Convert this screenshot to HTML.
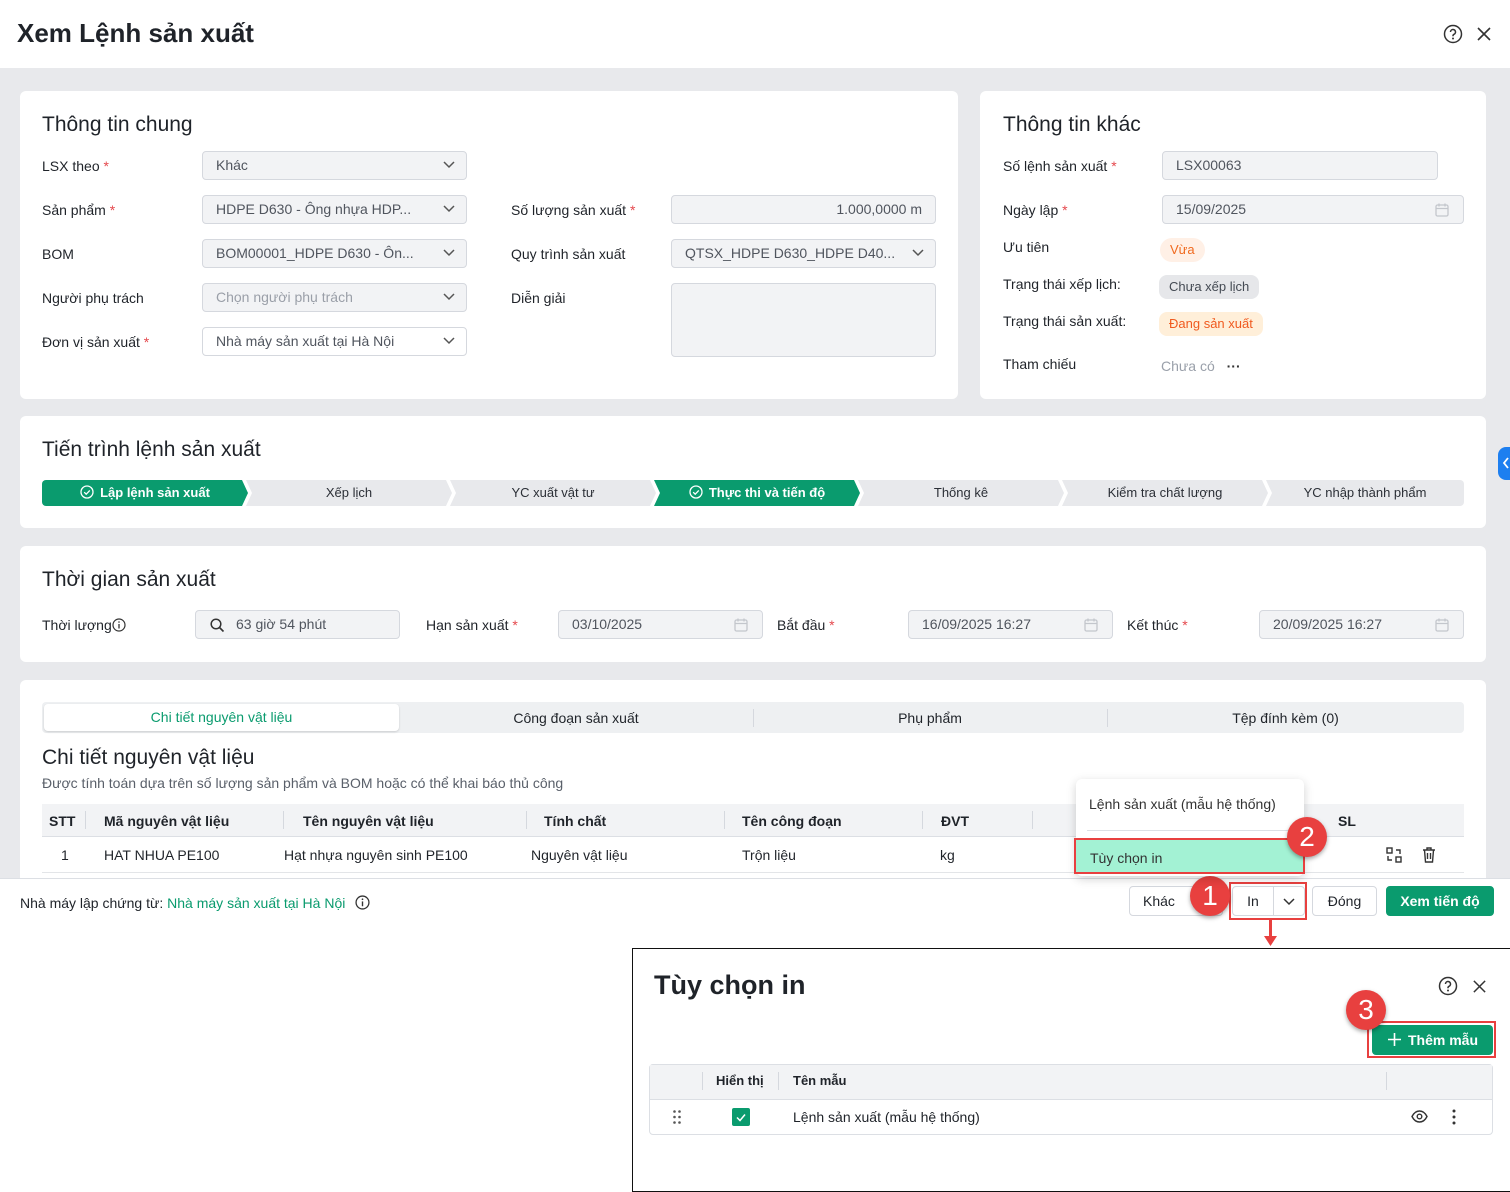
<!DOCTYPE html>
<html><head><meta charset="utf-8"><style>
*{box-sizing:border-box;margin:0;padding:0}
body{width:1510px;height:1190px;position:relative;overflow:hidden;background:#fff;font-family:"Liberation Sans","Noto Sans CJK SC",sans-serif;font-size:14px;color:#1f2329}
.a{position:absolute}
.card{position:absolute;background:#fff;border-radius:6px}
.h2{position:absolute;font-size:21px;color:#1f2329}
.lbl{position:absolute;font-size:14px;color:#1f2329}
.req{color:#e5484d}
.inp{position:absolute;height:29px;border:1px solid #d5d8de;border-radius:4px;background:#f2f3f5;padding:0 13px;line-height:27px;color:#50555e;white-space:nowrap;overflow:hidden}
.chev{position:absolute;right:11px;top:9px}
.step{position:absolute;top:480px;height:26px;line-height:26px;text-align:center;font-size:13px;background:#e8e9ec;color:#2b2f36;clip-path:polygon(0 0,calc(100% - 6px) 0,100% 50%,calc(100% - 6px) 100%,0 100%,6px 50%)}
.step.g{background:#0a9b6e;color:#fff;font-weight:bold}
.badge{position:absolute;border-radius:12px;padding:0 10px;height:24px;line-height:24px;font-size:13px}
.th{position:absolute;top:813px;font-weight:bold;font-size:14px}
.td{position:absolute;top:847px}
.sep{position:absolute;width:1px;height:18px;background:#d5d8de}
.circ{position:absolute;width:40px;height:40px;border-radius:50%;background:#e8403f;color:#fff;font-size:28px;text-align:center;line-height:40px;box-shadow:0 2px 4px rgba(0,0,0,.35)}
.btn{position:absolute;height:30px;line-height:28px;border:1px solid #d5d8de;border-radius:4px;background:#fff;text-align:center;font-size:14px}
</style></head><body>
<div class="a" style="left:0;top:68px;width:1510px;height:810px;background:#e8e9ec"></div>
<div class="a" style="left:17px;top:18px;font-size:26px;font-weight:bold;color:#1f2329">Xem Lệnh sản xuất</div>
<svg class="a" style="left:1443px;top:24px" width="20" height="20" viewBox="0 0 20 20"><circle cx="10" cy="10" r="8.5" fill="none" stroke="#333" stroke-width="1.5"/><path d="M7.5 8a2.5 2.5 0 1 1 3.5 2.3c-.7.3-1 .8-1 1.5v.5" fill="none" stroke="#333" stroke-width="1.5"/><circle cx="10" cy="14.5" r="1" fill="#333"/></svg>
<svg class="a" style="left:1476px;top:26px" width="16" height="16" viewBox="0 0 16 16"><path d="M2 2L14 14M14 2L2 14" stroke="#333" stroke-width="1.6"/></svg>

<div class="card" style="left:20px;top:91px;width:938px;height:308px"></div>
<div class="h2" style="left:42px;top:113px">Thông tin chung</div>
<div class="lbl" style="left:42px;top:158px">LSX theo <span class="req">*</span></div>
<div class="inp" style="left:202px;top:151px;width:265px">Khác<svg class="chev" width="12" height="8"><path d="M1 1l5 5 5-5" fill="none" stroke="#555" stroke-width="1.5"/></svg></div>
<div class="lbl" style="left:42px;top:202px">Sản phẩm <span class="req">*</span></div>
<div class="inp" style="left:202px;top:195px;width:265px">HDPE D630 - Ông nhựa HDP...<svg class="chev" width="12" height="8"><path d="M1 1l5 5 5-5" fill="none" stroke="#555" stroke-width="1.5"/></svg></div>
<div class="lbl" style="left:42px;top:246px">BOM</div>
<div class="inp" style="left:202px;top:239px;width:265px">BOM00001_HDPE D630 - Ôn...<svg class="chev" width="12" height="8"><path d="M1 1l5 5 5-5" fill="none" stroke="#555" stroke-width="1.5"/></svg></div>
<div class="lbl" style="left:42px;top:290px">Người phụ trách</div>
<div class="inp" style="left:202px;top:283px;width:265px;color:#9a9fa8">Chọn người phụ trách<svg class="chev" width="12" height="8"><path d="M1 1l5 5 5-5" fill="none" stroke="#555" stroke-width="1.5"/></svg></div>
<div class="lbl" style="left:42px;top:334px">Đơn vị sản xuất <span class="req">*</span></div>
<div class="inp" style="left:202px;top:327px;width:265px;background:#fff">Nhà máy sản xuất tại Hà Nội<svg class="chev" width="12" height="8"><path d="M1 1l5 5 5-5" fill="none" stroke="#555" stroke-width="1.5"/></svg></div>
<div class="lbl" style="left:511px;top:202px">Số lượng sản xuất <span class="req">*</span></div>
<div class="inp" style="left:671px;top:195px;width:265px;text-align:right">1.000,0000 m</div>
<div class="lbl" style="left:511px;top:246px">Quy trình sản xuất</div>
<div class="inp" style="left:671px;top:239px;width:265px">QTSX_HDPE D630_HDPE D40...<svg class="chev" width="12" height="8"><path d="M1 1l5 5 5-5" fill="none" stroke="#555" stroke-width="1.5"/></svg></div>
<div class="lbl" style="left:511px;top:290px">Diễn giải</div>
<div class="inp" style="left:671px;top:283px;width:265px;height:74px"></div>

<div class="card" style="left:980px;top:91px;width:506px;height:308px"></div>
<div class="h2" style="left:1003px;top:113px">Thông tin khác</div>
<div class="lbl" style="left:1003px;top:158px">Số lệnh sản xuất <span class="req">*</span></div>
<div class="inp" style="left:1162px;top:151px;width:276px">LSX00063</div>
<div class="lbl" style="left:1003px;top:202px">Ngày lập <span class="req">*</span></div>
<div class="inp" style="left:1162px;top:195px;width:302px">15/09/2025<svg class="a" style="right:14px;top:7px" width="14" height="14" viewBox="0 0 14 14"><rect x="1" y="2" width="12" height="11" rx="1.5" fill="none" stroke="#c3c6cc" stroke-width="1.3"/><path d="M1 5.5h12M4 0.5v3M10 0.5v3" stroke="#c3c6cc" stroke-width="1.3"/></svg></div>
<div class="lbl" style="left:1003px;top:239px">Ưu tiên</div>
<div class="badge" style="left:1160px;top:238px;background:#fff0e6;color:#f06a1f">Vừa</div>
<div class="lbl" style="left:1003px;top:276px">Trạng thái xếp lịch:</div>
<div class="badge" style="left:1159px;top:275px;background:#e6e7ea;color:#444a53;border-radius:8px">Chưa xếp lịch</div>
<div class="lbl" style="left:1003px;top:313px">Trạng thái sản xuất:</div>
<div class="badge" style="left:1159px;top:312px;background:#ffefd9;color:#f05a1f;border-radius:8px">Đang sản xuất</div>
<div class="lbl" style="left:1003px;top:356px">Tham chiếu</div>
<div class="lbl" style="left:1161px;top:358px;color:#9aa0aa">Chưa có <span style="color:#333;font-weight:bold;margin-left:8px">···</span></div>
<div class="a" style="left:1498px;top:447px;width:14px;height:33px;background:#1d7ff0;border-radius:8px 0 0 8px"></div>
<svg class="a" style="left:1502px;top:457px" width="8" height="12"><path d="M6 1L2 6l4 5" fill="none" stroke="#fff" stroke-width="1.8"/></svg>

<div class="card" style="left:20px;top:416px;width:1466px;height:112px"></div>
<div class="h2" style="left:42px;top:438px">Tiến trình lệnh sản xuất</div>
<div class="step g" style="left:42px;width:206px;clip-path:polygon(0 0,calc(100% - 6px) 0,100% 50%,calc(100% - 6px) 100%,0 100%);border-radius:4px 0 0 4px">
<svg style="vertical-align:-2px;margin-right:6px" width="14" height="14" viewBox="0 0 14 14"><circle cx="7" cy="7" r="6" fill="none" stroke="#fff" stroke-width="1.3"/><path d="M4.2 7.2l2 2 3.6-3.8" fill="none" stroke="#fff" stroke-width="1.3"/></svg>Lập lệnh sản xuất</div>
<div class="step" style="left:246px;width:206px">Xếp lịch</div>
<div class="step" style="left:450px;width:206px">YC xuất vật tư</div>
<div class="step g" style="left:654px;width:206px"><svg style="vertical-align:-2px;margin-right:6px" width="14" height="14" viewBox="0 0 14 14"><circle cx="7" cy="7" r="6" fill="none" stroke="#fff" stroke-width="1.3"/><path d="M4.2 7.2l2 2 3.6-3.8" fill="none" stroke="#fff" stroke-width="1.3"/></svg>Thực thi và tiến độ</div>
<div class="step" style="left:858px;width:206px">Thống kê</div>
<div class="step" style="left:1062px;width:206px">Kiểm tra chất lượng</div>
<div class="step" style="left:1266px;width:198px;clip-path:polygon(0 0,100% 0,100% 100%,0 100%,6px 50%);border-radius:0 4px 4px 0">YC nhập thành phẩm</div>

<div class="card" style="left:20px;top:546px;width:1466px;height:116px"></div>
<div class="h2" style="left:42px;top:568px">Thời gian sản xuất</div>
<div class="lbl" style="left:42px;top:617px">Thời lượng<svg style="vertical-align:-2px" width="14" height="14" viewBox="0 0 14 14"><circle cx="7" cy="7" r="6" fill="none" stroke="#333" stroke-width="1.2"/><path d="M7 6v4.5" stroke="#333" stroke-width="1.3"/><circle cx="7" cy="4" r=".8" fill="#333"/></svg></div>
<div class="inp" style="left:195px;top:610px;width:205px;padding-left:40px"><svg class="a" style="left:14px;top:7px" width="15" height="15" viewBox="0 0 15 15"><circle cx="6" cy="6" r="4.8" fill="none" stroke="#333" stroke-width="1.5"/><path d="M9.5 9.5l4 4" stroke="#333" stroke-width="1.6"/></svg>63 giờ 54 phút</div>
<div class="lbl" style="left:426px;top:617px">Hạn sản xuất <span class="req">*</span></div>
<div class="inp" style="left:558px;top:610px;width:205px">03/10/2025<svg class="a" style="right:14px;top:7px" width="14" height="14" viewBox="0 0 14 14"><rect x="1" y="2" width="12" height="11" rx="1.5" fill="none" stroke="#c3c6cc" stroke-width="1.3"/><path d="M1 5.5h12M4 0.5v3M10 0.5v3" stroke="#c3c6cc" stroke-width="1.3"/></svg></div>
<div class="lbl" style="left:777px;top:617px">Bắt đầu <span class="req">*</span></div>
<div class="inp" style="left:908px;top:610px;width:205px">16/09/2025 16:27<svg class="a" style="right:14px;top:7px" width="14" height="14" viewBox="0 0 14 14"><rect x="1" y="2" width="12" height="11" rx="1.5" fill="none" stroke="#c3c6cc" stroke-width="1.3"/><path d="M1 5.5h12M4 0.5v3M10 0.5v3" stroke="#c3c6cc" stroke-width="1.3"/></svg></div>
<div class="lbl" style="left:1127px;top:617px">Kết thúc <span class="req">*</span></div>
<div class="inp" style="left:1259px;top:610px;width:205px">20/09/2025 16:27<svg class="a" style="right:14px;top:7px" width="14" height="14" viewBox="0 0 14 14"><rect x="1" y="2" width="12" height="11" rx="1.5" fill="none" stroke="#c3c6cc" stroke-width="1.3"/><path d="M1 5.5h12M4 0.5v3M10 0.5v3" stroke="#c3c6cc" stroke-width="1.3"/></svg></div>

<div class="card" style="left:20px;top:680px;width:1466px;height:210px;border-radius:6px 6px 0 0"></div>
<div class="a" style="left:42px;top:702px;width:1422px;height:31px;background:#eef0f2;border-radius:4px"></div>
<div class="a" style="left:44px;top:704px;width:355px;height:27px;background:#fff;border-radius:4px;box-shadow:0 1px 2px rgba(0,0,0,.15);text-align:center;line-height:27px;color:#0a9b6e">Chi tiết nguyên vật liệu</div>
<div class="a" style="left:400px;top:710px;width:352px;text-align:center">Công đoạn sản xuất</div>
<div class="a" style="left:753px;top:710px;width:354px;text-align:center">Phụ phẩm</div>
<div class="a" style="left:1107px;top:710px;width:357px;text-align:center">Tệp đính kèm (0)</div>
<div class="sep" style="left:753px;top:709px"></div><div class="sep" style="left:1107px;top:709px"></div>
<div class="h2" style="left:42px;top:746px">Chi tiết nguyên vật liệu</div>
<div class="a" style="left:42px;top:775px;color:#5a606a">Được tính toán dựa trên số lượng sản phẩm và BOM hoặc có thể khai báo thủ công</div>
<div class="a" style="left:42px;top:804px;width:1422px;height:33px;background:#f2f3f5;border-bottom:1px solid #dcdfe4"></div>
<div class="th" style="left:49px">STT</div><div class="sep" style="left:85px;top:811px"></div>
<div class="th" style="left:104px">Mã nguyên vật liệu</div><div class="sep" style="left:283px;top:811px"></div>
<div class="th" style="left:303px">Tên nguyên vật liệu</div><div class="sep" style="left:526px;top:811px"></div>
<div class="th" style="left:544px">Tính chất</div><div class="sep" style="left:724px;top:811px"></div>
<div class="th" style="left:742px">Tên công đoạn</div><div class="sep" style="left:922px;top:811px"></div>
<div class="th" style="left:941px">ĐVT</div><div class="sep" style="left:1032px;top:811px"></div>
<div class="th" style="left:1338px">SL</div>
<div class="td" style="left:61px">1</div>
<div class="td" style="left:104px">HAT NHUA PE100</div>
<div class="td" style="left:284px">Hạt nhựa nguyên sinh PE100</div>
<div class="td" style="left:531px">Nguyên vật liệu</div>
<div class="td" style="left:742px">Trộn liệu</div>
<div class="td" style="left:940px">kg</div>
<svg class="a" style="left:1386px;top:847px" width="16" height="16" viewBox="0 0 16 16"><rect x="1" y="1" width="5" height="5" fill="none" stroke="#333" stroke-width="1.4"/><rect x="10" y="10" width="5" height="5" fill="none" stroke="#333" stroke-width="1.4"/><path d="M10 3h4v4M6 13H2V9" fill="none" stroke="#333" stroke-width="1.4"/></svg>
<svg class="a" style="left:1422px;top:847px" width="14" height="16" viewBox="0 0 14 16"><path d="M1 3h12M5 3V1h4v2M2.5 3l1 12h7l1-12M5.5 6v6M8.5 6v6" fill="none" stroke="#333" stroke-width="1.4"/></svg>
<div class="a" style="left:42px;top:872px;width:1422px;height:1px;background:#e3e5e8"></div>

<div class="a" style="left:0;top:878px;width:1510px;height:312px;background:#fff;border-top:1px solid #dcdfe4"></div>
<div class="a" style="left:20px;top:895px">Nhà máy lập chứng từ: <span style="color:#0a9b6e">Nhà máy sản xuất tại Hà Nội</span> <svg style="vertical-align:-2px;margin-left:6px" width="15" height="15" viewBox="0 0 14 14"><circle cx="7" cy="7" r="6" fill="none" stroke="#333" stroke-width="1.2"/><path d="M7 6v4.5" stroke="#333" stroke-width="1.3"/><circle cx="7" cy="4" r=".8" fill="#333"/></svg></div>
<div class="btn" style="left:1129px;top:886px;width:94px;text-align:left;padding-left:13px">Khác</div>
<div class="btn" style="left:1232px;top:886px;width:73px"><span class="a" style="left:0;width:40px;text-align:center">In</span><span class="a" style="left:40px;top:0;width:1px;height:28px;background:#d5d8de"></span><svg class="a" style="left:50px;top:11px" width="12" height="8"><path d="M1 1l5 5 5-5" fill="none" stroke="#333" stroke-width="1.5"/></svg></div>
<div class="a" style="left:1229px;top:882px;width:78px;height:38px;border:2px solid #e8403f"></div>
<div class="btn" style="left:1312px;top:886px;width:65px">Đóng</div>
<div class="btn" style="left:1386px;top:886px;width:108px;background:#0a9b6e;border-color:#0a9b6e;color:#fff;font-weight:bold">Xem tiến độ</div>
<div class="circ" style="left:1190px;top:876px">1</div>
<div class="a" style="left:1269px;top:920px;width:3px;height:20px;background:#e8403f"></div>
<svg class="a" style="left:1264px;top:936px" width="13" height="10"><path d="M0 0h13L6.5 10z" fill="#e8403f"/></svg>

<div class="a" style="left:1076px;top:779px;width:228px;height:97px;background:#fff;border-radius:6px;box-shadow:0 3px 10px rgba(0,0,0,.18)"></div>
<div class="a" style="left:1089px;top:796px;color:#333">Lệnh sản xuất (mẫu hệ thống)</div>
<div class="a" style="left:1087px;top:830px;width:204px;height:1px;background:#dcdfe4"></div>
<div class="a" style="left:1074px;top:838px;width:231px;height:36px;background:#a3f2d4;border:2px solid #e8403f;padding-left:14px;line-height:36px;color:#333">Tùy chọn in</div>
<div class="circ" style="left:1287px;top:817px">2</div>

<div class="a" style="left:632px;top:948px;width:880px;height:244px;background:#fff;border:1.5px solid #111"></div>
<div class="a" style="left:654px;top:970px;font-size:27px;font-weight:bold">Tùy chọn in</div>
<svg class="a" style="left:1438px;top:976px" width="20" height="20" viewBox="0 0 20 20"><circle cx="10" cy="10" r="8.5" fill="none" stroke="#333" stroke-width="1.5"/><path d="M7.5 8a2.5 2.5 0 1 1 3.5 2.3c-.7.3-1 .8-1 1.5v.5" fill="none" stroke="#333" stroke-width="1.5"/><circle cx="10" cy="14.5" r="1" fill="#333"/></svg>
<svg class="a" style="left:1472px;top:979px" width="15" height="15" viewBox="0 0 16 16"><path d="M2 2L14 14M14 2L2 14" stroke="#333" stroke-width="1.6"/></svg>
<div class="a" style="left:1367px;top:1021px;width:129px;height:37px;border:2px solid #e8403f"></div>
<div class="a" style="left:1372px;top:1025px;width:121px;height:30px;background:#0a9b6e;border-radius:4px;color:#fff;font-weight:bold;line-height:30px;padding-left:36px">Thêm mẫu</div>
<svg class="a" style="left:1388px;top:1033px" width="13" height="13"><path d="M6.5 0v13M0 6.5h13" stroke="#fff" stroke-width="1.6"/></svg>
<div class="circ" style="left:1346px;top:990px">3</div>
<div class="a" style="left:649px;top:1064px;width:844px;height:71px;border:1px solid #dcdfe4;border-radius:4px"></div>
<div class="a" style="left:650px;top:1065px;width:842px;height:35px;background:#f2f3f5;border-bottom:1px solid #dcdfe4"></div>
<div class="sep" style="left:702px;top:1072px"></div><div class="sep" style="left:778px;top:1072px"></div><div class="sep" style="left:1386px;top:1072px"></div>
<div class="a" style="left:716px;top:1073px;font-weight:bold;font-size:13px">Hiển thị</div>
<div class="a" style="left:793px;top:1073px;font-weight:bold;font-size:13px">Tên mẫu</div>
<svg class="a" style="left:673px;top:1110px" width="8" height="14"><g fill="#555"><circle cx="1.5" cy="1.5" r="1.3"/><circle cx="6.5" cy="1.5" r="1.3"/><circle cx="1.5" cy="7" r="1.3"/><circle cx="6.5" cy="7" r="1.3"/><circle cx="1.5" cy="12.5" r="1.3"/><circle cx="6.5" cy="12.5" r="1.3"/></g></svg>
<div class="a" style="left:732px;top:1108px;width:18px;height:18px;background:#0a9b6e;border-radius:2px"></div>
<svg class="a" style="left:735px;top:1111px" width="12" height="12"><path d="M2 6.5l3 3 5-6" fill="none" stroke="#fff" stroke-width="1.5"/></svg>
<div class="a" style="left:793px;top:1109px">Lệnh sản xuất (mẫu hệ thống)</div>
<svg class="a" style="left:1411px;top:1110px" width="17" height="13" viewBox="0 0 17 13"><path d="M1 6.5C3 2.5 6 1 8.5 1S14 2.5 16 6.5C14 10.5 11 12 8.5 12S3 10.5 1 6.5z" fill="none" stroke="#333" stroke-width="1.4"/><circle cx="8.5" cy="6.5" r="2.3" fill="none" stroke="#333" stroke-width="1.4"/></svg>
<svg class="a" style="left:1452px;top:1109px" width="4" height="16"><g fill="#333"><circle cx="2" cy="2" r="1.5"/><circle cx="2" cy="8" r="1.5"/><circle cx="2" cy="14" r="1.5"/></g></svg>
</body></html>
